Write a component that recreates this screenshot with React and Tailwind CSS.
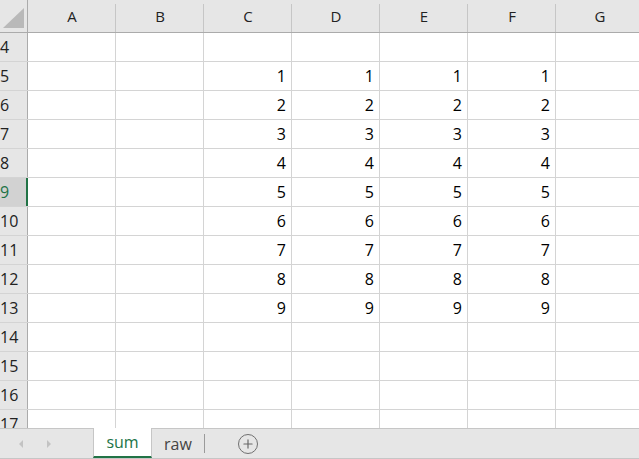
import { Plus } from 'lucide-react';

const cols = ['A', 'B', 'C', 'D', 'E', 'F', 'G'];
const rows = [4, 5, 6, 7, 8, 9, 10, 11, 12, 13, 14, 15, 16, 17];

const valueFor = (row, col) => {
  if (row >= 5 && row <= 13 && ['C', 'D', 'E', 'F'].includes(col)) return row - 4;
  return '';
};

export default function App() {
  return (
    <div className="relative w-[639px] h-[459px] overflow-hidden bg-white text-[#000] font-['Open_Sans','Noto_Sans',sans-serif]">
      {/* Column headers */}
      <div className="flex h-[33px] bg-[#e6e6e6] border-b border-[#ababab]">
        <div className="relative w-[28px] shrink-0 border-r border-[#ababab]">
          <div className="absolute left-[3px] top-[8px] w-0 h-0 border-l-[21px] border-l-transparent border-b-[20px] border-b-[#b9b9b9]" />
        </div>
        {cols.map((c) => (
          <div key={c} className="w-[88px] shrink-0 flex items-center justify-center text-[15px] text-[#222] relative">
            {c}
            <div className="absolute right-0 top-[4px] bottom-0 w-px bg-[#c6c6c6]" />
          </div>
        ))}
      </div>

      {/* Rows */}
      {rows.map((r) => (
        <div key={r} className="flex h-[29px] border-b border-[#d4d4d4]">
          <div
            className={`w-[28px] shrink-0 flex items-center pl-0 text-[16px] border-r ${
              r === 9
                ? 'bg-[#d2d2d2] text-[#217346] border-r-2 border-r-[#217346]'
                : 'bg-[#e6e6e6] text-[#222] border-[#ababab]'
            }`}
          >
            {r}
          </div>
          {cols.map((c) => (
            <div
              key={c}
              className="w-[88px] shrink-0 flex items-center justify-end pr-[5px] text-[16px] border-r border-[#d4d4d4]"
            >
              {valueFor(r, c)}
            </div>
          ))}
        </div>
      ))}

      {/* Sheet tabs */}
      <div className="absolute left-0 right-0 top-[428px] bottom-0 flex items-stretch bg-[#e6e6e6] border-t border-[#c6c6c6] border-b border-b-[#c6c6c6]">
        <div className="w-[93px] flex items-center gap-[20px] pl-[17px] text-[#c3c3c3]">
          <svg width="8" height="10" viewBox="0 0 8 10"><path d="M6 1 L2 5 L6 9 Z" fill="currentColor" /></svg>
          <svg width="8" height="10" viewBox="0 0 8 10"><path d="M2 1 L6 5 L2 9 Z" fill="currentColor" /></svg>
        </div>
        <div className="w-[59px] -mt-px bg-white border-x border-[#c6c6c6] border-b-2 border-b-[#217346] flex items-center justify-center text-[16px] text-[#217346]">
          sum
        </div>
        <div className="w-[52px] flex items-center justify-center text-[16px] text-[#444]">raw</div>
        <div className="w-px my-[5px] bg-[#9a9a9a]" />
        <div className="flex items-center pl-[33px] text-[#666]">
          <div className="w-[20px] h-[20px] rounded-full border-[1.5px] border-[#707070] flex items-center justify-center">
            <Plus size={14} strokeWidth={2} />
          </div>
        </div>
      </div>
    </div>
  );
}
